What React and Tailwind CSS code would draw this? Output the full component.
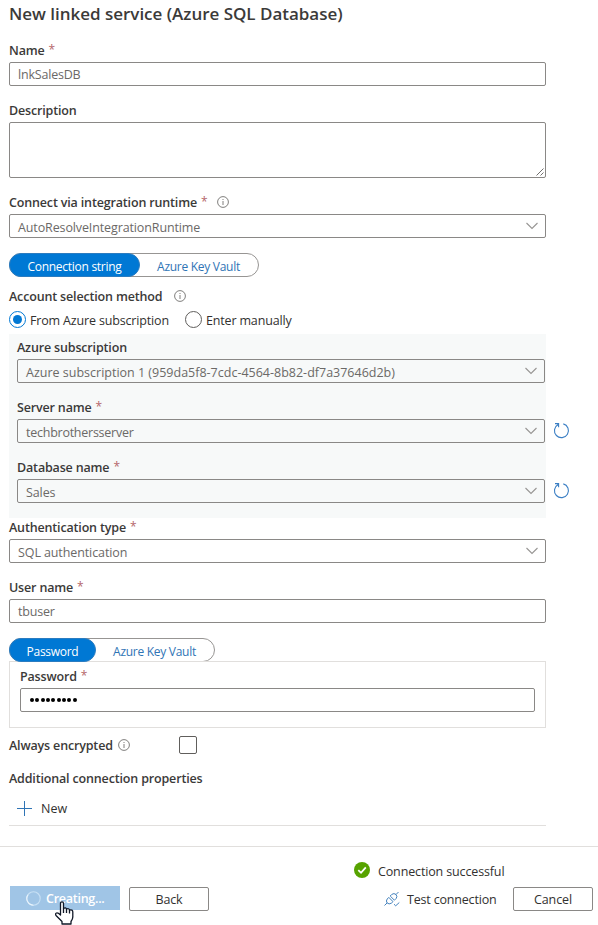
import { useState } from 'react';

const Label = ({ children, required, className = '' }) => (
    <div className={`flex items-center whitespace-nowrap font-semibold text-[12.5px] tracking-[-0.16px] leading-[18px] text-[#3b3a39] ${className || 'h-6 pt-0.5'}`}>
        {children}
        {required && <span className="mb-0.5 ml-1 text-[12px] font-normal text-[#b5666a]">*</span>}
    </div>
);

const InfoIcon = ({ className }) => (
    <svg className={className} width="12" height="12" viewBox="0 0 12 12" fill="none" stroke="#605e5c" strokeWidth="0.8">
        <circle cx="6" cy="6" r="5.4" />
        <path d="M6 5v4M6 3v1" />
    </svg>
);

const Chevron = () => (
    <svg className="mb-px ml-auto shrink-0" width="12" height="8" viewBox="0 0 12 8" fill="none" stroke="#979593" strokeWidth="1.1">
        <path d="M0.5 1L6 6.5L11.5 1" />
    </svg>
);

const RefreshIcon = () => (
    <svg className="mb-0.5 ml-2 shrink-0" width="17" height="17" viewBox="0 0 17 17" fill="none" stroke="#3b7fc4" strokeWidth="1.1">
        <path d="M10.3 1.9a7 7 0 1 1-5.2 .6M2 1.6h3.6v3.6" />
    </svg>
);

const Select = ({ value, className = '', tracking = 'tracking-[-0.1px]' }) => (
    <div className={`flex h-6 shrink-0 items-center rounded-xs border border-[#8a8886] pr-[7px] pl-2 text-[12.5px] leading-[18px] whitespace-nowrap text-[#6b6967] ${tracking} ${className}`}>
        <span className="pt-1">{value}</span>
        <Chevron />
    </div>
);

const Pills = ({ options, widths }) => {
    const [active, setActive] = useState(0);

    return (
        <div className="flex h-6 w-max rounded-full border border-[#979593] text-[12px] tracking-[-0.28px]">
            {options.map((option, i) => (
                <button
                    key={option}
                    onClick={() => setActive(i)}
                    className={`-my-px -ml-px h-6 rounded-full pt-[3px] whitespace-nowrap ${widths[i]} ${active === i ? 'border border-[#2b7cc0] bg-[#0078d4] font-medium text-white' : 'text-[#2f74b5]'}`}
                >
                    {option}
                </button>
            ))}
        </div>
    );
};

const Radio = ({ checked, children }) => (
    <div className="flex items-center gap-1 text-[12.5px] tracking-[-0.16px] whitespace-nowrap text-[#323130]">
        <span className={`mb-px flex h-[17px] w-[17px] items-center justify-center rounded-full border ${checked ? 'border-[#0078d4]' : 'border-[#605e5c]'}`}>
            {checked && <span className="h-[9px] w-[9px] rounded-full bg-[#0078d4]" />}
        </span>
        <span className="pt-[3px]">{children}</span>
    </div>
);

const App = () => (
    <div className="relative h-[925px] w-[598px] overflow-hidden bg-white font-['Open_Sans',sans-serif] text-[#323130]">
        <div className="h-[846px] w-[546px] pl-[9px]">
            <h1 className="h-[38px] text-[17px] leading-7 font-semibold tracking-[-0.02px] whitespace-nowrap text-[#3b3a39]">New linked service (Azure SQL Database)</h1>

            <Label required>Name</Label>
            <div className="mb-3 flex h-6 items-center rounded-xs border border-[#8a8886] px-2 pt-[3px] text-[12.5px] tracking-[-0.2px] text-[#6b6967]">lnkSalesDB</div>

            <Label>Description</Label>
            <div className="mb-3 flex h-14 items-end justify-end rounded-xs border border-[#8a8886] p-px">
                <svg width="8" height="8" viewBox="0 0 8 8" stroke="#605e5c" strokeWidth="0.9">
                    <path d="M0.5 7.5L7.5 0.5M4.5 7.5L7.5 4.5" />
                </svg>
            </div>

            <Label required>
                Connect via integration runtime
                <InfoIcon className="order-last mb-0.5 ml-[10px]" />
            </Label>
            <Select value="AutoResolveIntegrationRuntime" tracking="tracking-[-0.12px]" />

            <div className="mt-[15px]">
                <Pills options={['Connection string', 'Azure Key Vault']} widths={['w-[131px]', 'w-[119px]']} />
            </div>

            <Label className="mt-[10px] h-[18px] pt-px">
                Account selection method
                <InfoIcon className="mb-px ml-3" />
            </Label>
            <div className="mt-[6px] flex h-[18px] gap-4">
                <Radio checked>From Azure subscription</Radio>
                <Radio>Enter manually</Radio>
            </div>

            <div className="mt-[5px] h-[184px] bg-[#f7f9f9] pt-px pl-2">
                <Label>Azure subscription</Label>
                <Select value="Azure subscription 1 (959da5f8-7cdc-4564-8b82-df7a37646d2b)" className="mr-px mb-3" tracking="tracking-normal" />
                <Label required>Server name</Label>
                <div className="mb-3 flex w-[553px] items-center">
                    <Select value="techbrothersserver" className="w-[528px]" tracking="tracking-[-0.25px]" />
                    <RefreshIcon />
                </div>
                <Label required>Database name</Label>
                <div className="flex w-[553px] items-center">
                    <Select value="Sales" className="w-[528px]" />
                    <RefreshIcon />
                </div>
            </div>

            <Label required className="mb-[3px] h-[18px] pt-0.5">Authentication type</Label>
            <Select value="SQL authentication" className="mb-3" />
            <Label required>User name</Label>
            <div className="mb-[15px] flex h-6 items-center rounded-xs border border-[#8a8886] px-2 pt-[3px] text-[12.5px] tracking-[-0.2px] text-[#6b6967]">tbuser</div>

            <Pills options={['Password', 'Azure Key Vault']} widths={['w-[87px]', 'w-[119px]']} />
            <div className="-mt-px h-[67px] border border-[#e1dfdd] px-[10px] pt-[2px]">
                <Label required className="h-6 pt-0.5">Password</Label>
                <div className="flex h-6 items-center gap-[1.33px] rounded-xs border border-[#8a8886] pl-[9px]">
                    {Array.from({ length: 9 }, (_, i) => (
                        <span key={i} className="h-1 w-1 rounded-full bg-black" />
                    ))}
                </div>
            </div>

            <div className="mt-2 flex h-[18px] items-center">
                <Label className="w-[170px] pt-px">
                    Always encrypted
                    <InfoIcon className="mb-px ml-[5px]" />
                </Label>
                <span className="h-[18px] w-[18px] rounded-xs border border-[#605e5c]" />
            </div>
            <Label className="mt-[15px] h-[18px] pt-px tracking-[-0.12px]">Additional connection properties</Label>
            <div className="mt-[9px] flex h-[30px] items-center border-b border-[#e1dfdd] pb-[3px] pl-2 text-[12.5px]">
                <svg className="mr-2 mb-px" width="16" height="16" viewBox="0 0 16 16" stroke="#2f74b5" strokeWidth="1">
                    <path d="M7.5 0v15M0 7.5h15" />
                </svg>
                New
            </div>
        </div>

        <footer className="h-[79px] border-t border-[#e1dfdd] pt-[15px] text-[12.5px]">
            <div className="flex h-[18px] items-center pl-[354px] tracking-[-0.14px] whitespace-nowrap">
                <svg className="mr-2 mb-0.5" width="16" height="16" viewBox="0 0 16 16" fill="none">
                    <circle cx="8" cy="8" r="8" fill="#57a300" />
                    <path d="M4.3 8.2L7 10.8L11.8 5.3" stroke="#fff" strokeWidth="1.8" />
                </svg>
                <span className="pt-[3px]">Connection successful</span>
            </div>
            <div className="mt-[6px] flex items-start pl-[10px] whitespace-nowrap">
                <button className="flex h-6 w-[110px] items-center bg-[#a0c5e6] pl-4 font-semibold tracking-[-0.26px] text-white">
                    <svg className="mr-[5px]" width="15" height="15" viewBox="0 0 15 15" fill="none">
                        <circle cx="7.5" cy="7.5" r="6.7" stroke="#c7e0f4" strokeWidth="1.1" />
                        <path d="M7.5 14.2A6.7 6.7 0 0 1 2 3.7" stroke="#e8f3fb" strokeWidth="1.1" />
                    </svg>
                    <span className="pt-0.5">Creating...</span>
                </button>
                <button className="mt-px ml-[9px] h-6 w-20 rounded-xs border border-[#8a8886] pt-[3px] tracking-[-0.1px]">Back</button>
                <div className="mt-px ml-[175px] flex h-6 w-[129px] items-center tracking-[-0.18px]">
                    <svg className="mr-[7px]" width="16" height="16" viewBox="0 0 16 16" fill="none" stroke="#2f74b5" strokeWidth="0.9">
                        <path d="M0.5 14.5L3 12M12 3.5L14.5 1M6.2 5L10.4 9.2M4.8 6.4L9 10.6M4.8 6.4L3.2 8Q1.6 10 3.2 12Q5 13.7 7.3 12.2L9 10.6M6.2 5L7.8 3.4Q10 1.7 12 3.5Q13.7 5.4 12.2 7.4L10.4 9.2M10 13.2L11.7 14.8L15.3 11.5" />
                    </svg>
                    <span className="pt-0.5">Test connection</span>
                </div>
                <button className="mt-px h-6 w-20 rounded-xs border border-[#8a8886] pt-[3px] tracking-[-0.1px]">Cancel</button>
            </div>
        </footer>

        {/* hand cursor over the create button */}
        <svg className="absolute top-[901px] left-[54px]" width="21" height="24" viewBox="0 0 21 24" fill="#fff" stroke="#111827" strokeWidth="1.3" strokeLinejoin="round">
            <path d="M6.5 14V2.5Q6.5 0.9 8 0.9Q9.5 0.9 9.5 2.5V7.5Q11.8 6.2 12.5 8Q14.8 7 15.5 9Q18.8 8.3 18.8 11V16Q18.8 18 17 20.5V23H8V20.5L2 14.5Q1 12.5 2.5 12Q4 11.5 6.5 14Z" />
            <path d="M9.5 7.5V12M12.5 8V12M15.5 9V12.5" />
        </svg>
    </div>
);

export default App;
